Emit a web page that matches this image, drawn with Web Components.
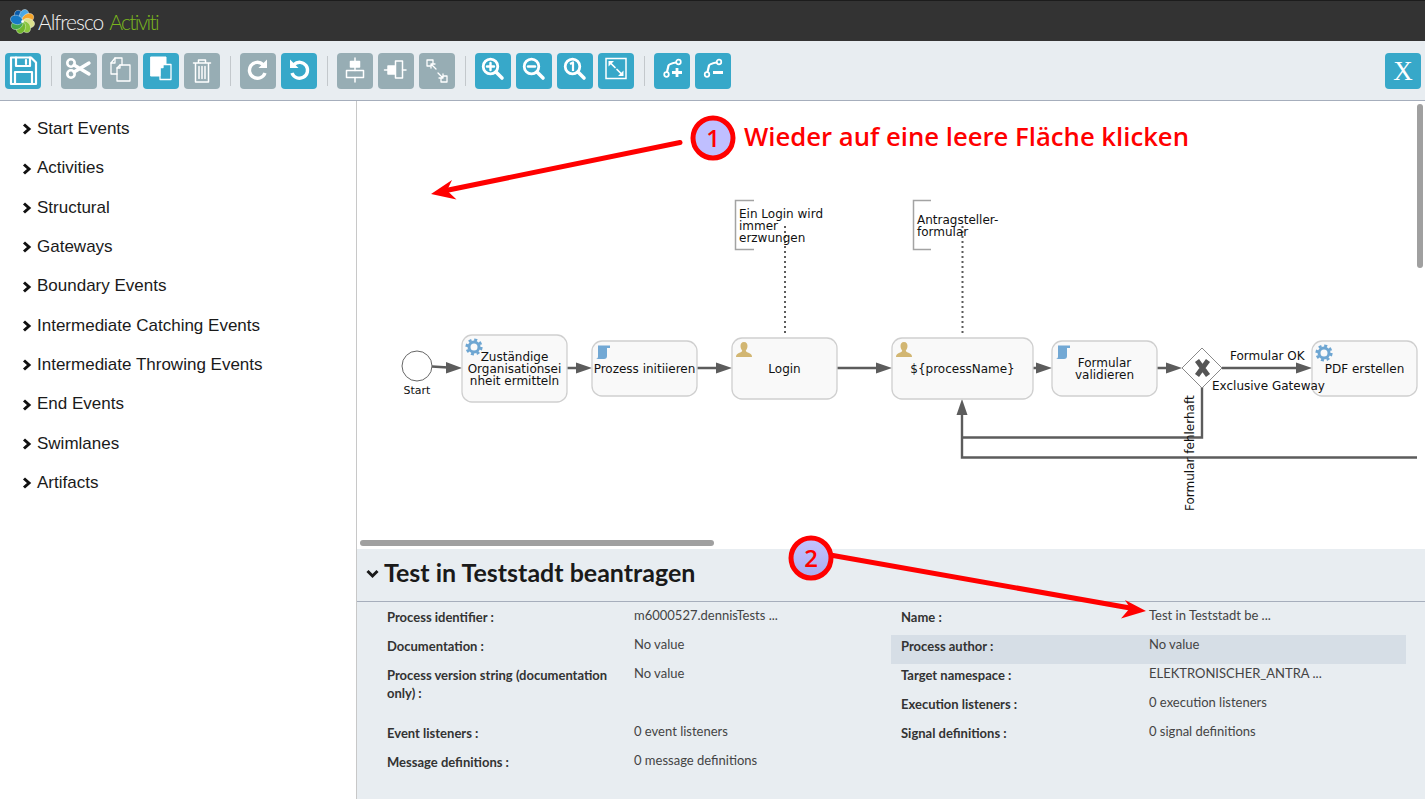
<!DOCTYPE html>
<html lang="de">
<head>
<meta charset="utf-8">
<title>Alfresco Activiti</title>
<style>
  html, body { margin: 0; height: 100%; }
  body { width: 1425px; height: 799px; overflow: hidden; display: flex; flex-direction: column; position: relative; background: #fff; font-family: "Liberation Sans", Arial, sans-serif; }
  svg.ico { width: 36px; height: 36px; display: block; fill: none; stroke: #fff; stroke-width: 1.6; stroke-linecap: round; stroke-linejoin: round; }
</style>
</head>
<body>

<app-header></app-header>

<app-toolbar>
  <!-- save -->
  <tool-button><svg class="ico" viewBox="0 0 36 36"><path d="M6 4.500H26L31 9.500V31H6Z" stroke-width="2.200"/><path d="M11 4.500V13H25V4.500M21 7V11M10 31V19H27V31" stroke-width="2.200"/></svg></tool-button>
  <tool-separator></tool-separator>
  <!-- cut -->
  <tool-button off><svg class="ico" viewBox="0 0 36 36"><circle cx="10" cy="10" r="3.700" stroke-width="2.600"/><circle cx="10" cy="21" r="3.700" stroke-width="2.600"/><path d="M13 12L28 21M13 19L28 10" stroke-width="3.400"/></svg></tool-button>
  <!-- copy -->
  <tool-button off><svg class="ico" viewBox="0 0 36 36"><path d="M15 21H9V10L13 5H20V12" stroke-width="1.300"/><path d="M13 5V10H9" stroke-width="1.300"/><path d="M15 15L18 12H28V28H15Z" stroke-width="1.300"/><path d="M18 12V15H15" stroke-width="1.300"/></svg></tool-button>
  <!-- paste -->
  <tool-button><svg class="ico" viewBox="0 0 36 36"><path d="M8 4H23V11H20L17 14V23H8Z" fill="#fff" stroke-width="1"/><path d="M20 11.500H28V26.500H17V14.500Z" stroke-width="1.300"/><path d="M20 11.500V14.500H17" fill="#fff" stroke-width="1.300"/></svg></tool-button>
  <!-- delete -->
  <tool-button off><svg class="ico" viewBox="0 0 36 36"><path d="M9.500 10H26.500M14.500 10V7H21.500V10M11.500 10V29H24.500V10M15 13.500V25.500M18 13.500V25.500M21 13.500V25.500" stroke-width="1.500"/></svg></tool-button>
  <tool-separator></tool-separator>
  <!-- redo -->
  <tool-button off><svg class="ico" viewBox="0 0 36 36"><path d="M23 11.500A8 8 0 1 0 25 20" stroke-width="3.400" stroke-linecap="butt"/><path d="M27 6.500V15H18.500Z" fill="#fff" stroke="none"/></svg></tool-button>
  <!-- undo -->
  <tool-button><svg class="ico" viewBox="0 0 36 36"><path d="M13 11.500A8 8 0 1 1 11 20" stroke-width="3.400" stroke-linecap="butt"/><path d="M9 6.500V15H17.500Z" fill="#fff" stroke="none"/></svg></tool-button>
  <tool-separator></tool-separator>
  <!-- align -->
  <tool-button off><svg class="ico" viewBox="0 0 36 36"><path d="M13.500 14V8.500H22.500V14Z" fill="#fff" stroke-width="1.500"/><path d="M18 5V8.500M18 14V17.500M18 24.500V29" stroke-width="1.500"/><rect x="9.500" y="17.500" width="17" height="7" stroke-width="1.500"/></svg></tool-button>
  <tool-button off><svg class="ico" viewBox="0 0 36 36"><path d="M10 13H17V21H10Z" fill="#fff" stroke-width="1.500"/><path d="M6.500 17H10M24.500 17H28" stroke-width="1.500"/><rect x="17.500" y="8" width="7" height="17" stroke-width="1.500"/></svg></tool-button>
  <tool-button off><svg class="ico" viewBox="0 0 36 36"><path d="M14 10.500V7H8V13H11.500M22 25.500V29H28V23H24.500" stroke-width="1.300"/><path d="M12 11L17 16M12 11H16M12 11V15M24 25L19 20M24 25H20M24 25V21" stroke-width="1.300"/></svg></tool-button>
  <tool-separator></tool-separator>
  <!-- zoom in, out, actual size -->
  <tool-button><svg class="ico" viewBox="0 0 36 36"><circle cx="15.500" cy="13.500" r="7.300" stroke-width="2.800"/><path d="M21 19L27 25" stroke-width="3.600"/><path d="M12 13.500H19M15.500 10V17" stroke-width="2.400"/></svg></tool-button>
  <tool-button><svg class="ico" viewBox="0 0 36 36"><circle cx="15.500" cy="13.500" r="7.300" stroke-width="2.800"/><path d="M21 19L27 25" stroke-width="3.600"/><path d="M12 13.500H19" stroke-width="2.400"/></svg></tool-button>
  <tool-button><svg class="ico" viewBox="0 0 36 36"><circle cx="15.500" cy="13.500" r="7.300" stroke-width="2.800"/><path d="M21 19L27 25" stroke-width="3.600"/><path d="M13 11L16 9.500V18" stroke-width="2.200" stroke-linecap="butt"/></svg></tool-button>
  <!-- fit -->
  <tool-button><svg class="ico" viewBox="0 0 36 36"><rect x="8" y="5.500" width="20" height="20" stroke-width="1.500" stroke-linejoin="miter"/><path d="M13 10.500L17 14.500M19 16.500L23 20.500" stroke-width="1.700"/><path d="M10.500 8H16L10.500 13.500ZM25.500 23H20L25.500 17.500Z" fill="#fff" stroke="none"/></svg></tool-button>
  <tool-separator></tool-separator>
  <!-- add / remove bendpoint -->
  <tool-button><svg class="ico" viewBox="0 0 36 36"><circle cx="12.500" cy="21.500" r="2.300" stroke-width="1.700"/><circle cx="24.500" cy="9" r="2.300" stroke-width="1.700"/><path d="M13 19L14.500 12.500Q15 10.800 22 9.500" stroke-width="2.200"/><path d="M18 19.500H28M23 15V24" stroke-width="2.800" stroke-linecap="butt"/></svg></tool-button>
  <tool-button><svg class="ico" viewBox="0 0 36 36"><circle cx="12" cy="21.500" r="2.300" stroke-width="1.700"/><circle cx="24" cy="9" r="2.300" stroke-width="1.700"/><path d="M12.500 19L14 12.500Q14.500 10.800 21.500 9.500" stroke-width="2.200"/><path d="M18 19.500H28" stroke-width="2.800" stroke-linecap="butt"/></svg></tool-button>
  <tool-button slot="end"><span style="font:27px/36px 'Liberation Serif',serif;color:#fff;display:block;text-align:center;width:36px;height:36px">X</span></tool-button>
</app-toolbar>

<editor-main>
  <stencil-list slot="side">
    <stencil-item>Start Events</stencil-item>
    <stencil-item>Activities</stencil-item>
    <stencil-item>Structural</stencil-item>
    <stencil-item>Gateways</stencil-item>
    <stencil-item>Boundary Events</stencil-item>
    <stencil-item>Intermediate Catching Events</stencil-item>
    <stencil-item>Intermediate Throwing Events</stencil-item>
    <stencil-item>End Events</stencil-item>
    <stencil-item>Swimlanes</stencil-item>
    <stencil-item>Artifacts</stencil-item>
  </stencil-list>
  <diagram-canvas></diagram-canvas>
  <process-panel heading="Test in Teststadt beantragen">
    <div slot="left" style="--label-width: 247px">
      <prop-row><span slot="label">Process identifier :</span>m6000527.dennisTests ...</prop-row>
      <prop-row><span slot="label">Documentation :</span>No value</prop-row>
      <prop-row tall><span slot="label">Process version string (documentation only) :</span>No value</prop-row>
      <prop-row><span slot="label">Event listeners :</span>0 event listeners</prop-row>
      <prop-row><span slot="label">Message definitions :</span>0 message definitions</prop-row>
    </div>
    <div slot="right" style="--label-width: 248px">
      <prop-row><span slot="label">Name :</span>Test in Teststadt be ...</prop-row>
      <prop-row hover><span slot="label">Process author :</span>No value</prop-row>
      <prop-row><span slot="label">Target namespace :</span>ELEKTRONISCHER_ANTRA ...</prop-row>
      <prop-row><span slot="label">Execution listeners :</span>0 execution listeners</prop-row>
      <prop-row><span slot="label">Signal definitions :</span>0 signal definitions</prop-row>
    </div>
  </process-panel>
</editor-main>

<callout-layer></callout-layer>

<script>
// dark bar on top with the logo
class AppHeader extends HTMLElement {
  constructor() {
    super();
    this.attachShadow({ mode: 'open' });
  }
  connectedCallback() {
    // petals of the logo, one per colour, turned round the centre
    const colours = ['#0a5cab', '#4aa8e4', '#f5a52a', '#dbe28e', '#8cc63f', '#72b82e', '#45a84a', '#1679c5'];
    const petals = colours.map((c, i) =>
      `<ellipse cx="12.500" cy="6.300" rx="4.600" ry="6.200" fill="${c}" stroke="#fff" stroke-width=".35" transform="rotate(${i * 45 - 30} 12.500 12.500)"/>`).join('');
    this.shadowRoot.innerHTML = `
      <style>
        :host { display: flex; align-items: center; box-sizing: border-box; height: 41px; background: #333; border-top: 1px solid #1c1c1c; padding-left: 10px; flex: none; }
        svg { width: 25px; height: 25px; display: block; }
        .name { font: 300 21px/1 "Lato", "Liberation Sans", sans-serif; margin-left: 3px; letter-spacing: -1.050px; color: #f2f2f2; }
        .app { color: #7ab51d; margin-left: 6px; letter-spacing: -1.700px; }
      </style>
      <svg viewBox="0 0 25 25">${petals}<circle cx="12.500" cy="12.500" r="1.300" fill="#fff"/></svg>
      <span class="name">Alfresco</span><span class="name app">Activiti</span>
    `;
  }
}
customElements.define('app-header', AppHeader);

// row of tool buttons, anything with slot="end" goes to the right side
class AppToolbar extends HTMLElement {
  constructor() {
    super();
    this.attachShadow({ mode: 'open' });
  }
  connectedCallback() {
    this.shadowRoot.innerHTML = `
      <style>
        :host { display: flex; box-sizing: border-box; height: 60px; flex: none; align-items: flex-start; padding: 12px 4px 0 5px; background: #e8edf1; border-bottom: 1px solid #a6aebc; }
        .left { display: flex; gap: 5px; flex: 1; }
      </style>
      <div class="left"><slot></slot></div>
      <slot name="end"></slot>
    `;
  }
}
customElements.define('app-toolbar', AppToolbar);

class ToolButton extends HTMLElement {
  constructor() {
    super();
    this.attachShadow({ mode: 'open' });
  }
  connectedCallback() {
    this.shadowRoot.innerHTML = `
      <style>
        :host { display: block; width: 36px; height: 36px; border-radius: 4px; background: #37a8c9; overflow: hidden; }
        :host([off]) { background: #97adb4; }
      </style>
      <slot></slot>
    `;
  }
}
customElements.define('tool-button', ToolButton);

class ToolSeparator extends HTMLElement {
  constructor() {
    super();
    this.attachShadow({ mode: 'open' });
  }
  connectedCallback() {
    this.shadowRoot.innerHTML = `
      <style>
        :host { display: block; width: 1px; height: 30px; margin: 3px 4px 0 5px; background: #c3c8cc; }
      </style>
    `;
  }
}
customElements.define('tool-separator', ToolSeparator);

// main area: stencil on the left, canvas and properties on the right
class EditorMain extends HTMLElement {
  constructor() {
    super();
    this.attachShadow({ mode: 'open' });
  }
  connectedCallback() {
    this.shadowRoot.innerHTML = `
      <style>
        :host { display: grid; grid-template-columns: 357px 1fr; flex: 1; min-height: 0; }
        .side { border-right: 1px solid #c8c8c8; }
        .work { display: flex; flex-direction: column; min-width: 0; }
      </style>
      <div class="side"><slot name="side"></slot></div>
      <div class="work"><slot></slot></div>
    `;
  }
}
customElements.define('editor-main', EditorMain);

class StencilList extends HTMLElement {
  constructor() {
    super();
    this.attachShadow({ mode: 'open' });
  }
  connectedCallback() {
    this.shadowRoot.innerHTML = `
      <style>
        :host { display: block; padding-top: 8.300px; }
      </style>
      <slot></slot>
    `;
  }
}
customElements.define('stencil-list', StencilList);

class StencilItem extends HTMLElement {
  constructor() {
    super();
    this.attachShadow({ mode: 'open' });
  }
  connectedCallback() {
    this.shadowRoot.innerHTML = `
      <style>
        :host { display: flex; align-items: center; height: 39.330px; padding-left: 22px; font: 17px "Liberation Sans", Arial, sans-serif; color: #1a1a1a; }
        svg { width: 10px; height: 12px; margin-right: 5px; flex: none; margin-top: 1px; }
      </style>
      <svg viewBox="0 0 10 12"><path d="M2 1.500L7 6L2 10.500" fill="none" stroke="#111" stroke-width="3"/></svg>
      <slot></slot>
    `;
  }
}
customElements.define('stencil-item', StencilItem);

// the process diagram, a free canvas: the viewBox uses page coordinates
class DiagramCanvas extends HTMLElement {
  constructor() {
    super();
    this.attachShadow({ mode: 'open' });
  }
  task(x, y, w, h, icon, lines, firstY) {
    const labels = lines.map((t, i) => `<text x="${x + w / 2}" y="${firstY + i * 12}" text-anchor="middle">${t}</text>`).join('');
    const mark = icon ? `<use href="#${icon}" x="${x + 3}" y="${y + 3}"/>` : '';
    return `<rect x="${x}" y="${y}" width="${w}" height="${h}" rx="10" fill="#f9f9f9" stroke="#cfcfcf" stroke-width="1.300"/>${mark}${labels}`;
  }
  connectedCallback() {
    this.shadowRoot.innerHTML = `
      <style>
        :host { display: block; height: 448px; flex: none; overflow: hidden; background: #fff; }
        svg { display: block; width: 1068px; height: 448px; }
        text { font: 12px "DejaVu Sans", Verdana, sans-serif; fill: #111; }
        .flow { fill: none; stroke: #5c5c5c; stroke-width: 2.400; }
        .head { fill: #5c5c5c; }
        .dots { stroke: #5c5c5c; stroke-width: 2; stroke-dasharray: 2 3; fill: none; }
        .note { fill: none; stroke: #a3a3a3; stroke-width: 1.500; }
      </style>
      <svg viewBox="357 101 1068 448">
        <defs>
          <symbol id="gear" width="18" height="18" viewBox="0 0 18 18">
            <circle cx="9" cy="9" r="5" fill="none" stroke="#6ea6d2" stroke-width="3"/>
            <circle cx="9" cy="9" r="7.300" fill="none" stroke="#6ea6d2" stroke-width="2.600" stroke-dasharray="3 2.730"/>
          </symbol>
          <symbol id="scroll" width="16" height="16" viewBox="0 0 16 16">
            <path d="M3 1.500H15V4H12V12C12 14 11 15 9 15H1C3 14.500 3 13 3 12Z" fill="#72a8d4"/>
          </symbol>
          <symbol id="user" width="18" height="18" viewBox="0 0 18 18">
            <path d="M9 1C11.500 1 12.500 3 12.500 5C12.500 7 11.500 8.500 10.800 9.500C10.800 11 13 11.500 15 12.500C16.500 13.200 17 14.500 17 16H1C1 14.500 1.500 13.200 3 12.500C5 11.500 7.200 11 7.200 9.500C6.500 8.500 5.500 7 5.500 5C5.500 3 6.500 1 9 1Z" fill="#d2b672"/>
          </symbol>
        </defs>

        <!-- annotations and their links -->
        <path class="note" d="M754 200.500H735.500V249.500H754"/>
        <path class="note" d="M931 200.500H913.500V249.500H931"/>
        <path class="dots" d="M785 226V334"/>
        <path class="dots" d="M962.500 226V334"/>
        <text x="739" y="218">Ein Login wird</text>
        <text x="739" y="230">immer</text>
        <text x="739" y="242">erzwungen</text>
        <text x="917" y="224">Antragsteller-</text>
        <text x="917" y="236">formular</text>

        <!-- sequence flows -->
        <path class="flow" d="M432 366.500L448 367.500M567 368H576M697 368H716M837 368H876M1033 368H1036M1157 368H1166M1222 368H1296"/>
        <path class="flow" d="M1202 387V437.500H962M1417 457.500H962V414"/>
        <path class="head" d="M462 368L446 362V373.500Z M592 368L576 362.500V373.500Z M732 368L716 362.500V373.500Z M892 368L876 362.500V373.500Z M1052 368L1036 362.500V373.500Z M1182 368L1166 362.500V373.500Z M1312 368L1296 362.500V373.500Z M962 399L956.500 415H967.500Z"/>

        <!-- nodes -->
        <circle cx="417" cy="366" r="15" fill="#fff" stroke="#666" stroke-width="1"/>
        <text x="417" y="394" text-anchor="middle" style="font-size:11px">Start</text>
        ${this.task(462, 335, 105, 67, 'gear', ['Zuständige', 'Organisationsei', 'nheit ermitteln'], 361)}
        ${this.task(592, 341, 105, 55, 'scroll', ['Prozess initiieren'], 373)}
        ${this.task(732, 338, 105, 61, 'user', ['Login'], 373)}
        ${this.task(892, 338, 141, 61, 'user', ['\${processName}'], 373)}
        ${this.task(1052, 341, 105, 55, 'scroll', ['Formular', 'validieren'], 367)}
        ${this.task(1312, 341, 105, 55, 'gear', ['PDF erstellen'], 373)}

        <path d="M1202 348L1222 368L1202 388L1182 368Z" fill="#fff" stroke="#8a8a8a" stroke-width="1"/>
        <path d="M1197 360.500L1208 375.500M1208 360.500L1197 375.500" stroke="#555" stroke-width="5" fill="none"/>

        <text x="1230" y="360">Formular OK</text>
        <text x="1212" y="390">Exclusive Gateway</text>
        <text transform="translate(1194 511) rotate(-90)">Formular fehlerhaft</text>

        <!-- scrollbars -->
        <rect x="1417" y="104" width="6" height="164" rx="3" fill="#a0a0a0"/>
        <rect x="360" y="540" width="354" height="6" rx="3" fill="#a0a0a0"/>
      </svg>
    `;
  }
}
customElements.define('diagram-canvas', DiagramCanvas);

// properties of the selected element, two columns under a title
class ProcessPanel extends HTMLElement {
  constructor() {
    super();
    this.attachShadow({ mode: 'open' });
  }
  connectedCallback() {
    const heading = this.getAttribute('heading');
    this.shadowRoot.innerHTML = `
      <style>
        :host { display: block; flex: 1; background: #e8edf1; font-family: "Lato", "Liberation Sans", sans-serif; color: #333; }
        .title { display: flex; align-items: center; gap: 5px; height: 53px; box-sizing: border-box; padding: 0 0 7px 9px; border-bottom: 1px solid #a6aebc; font-size: 25px; font-weight: 700; color: #1a1a1a; }
        .title svg { width: 13px; height: 10px; flex: none; margin-top: 5px; }
        .cols { display: grid; grid-template-columns: 514px 515px; padding: 4px 0 0 20px; }
      </style>
      <div class="title">
        <svg viewBox="0 0 13 10"><path d="M1.500 2L6.500 7L11.500 2" fill="none" stroke="#1a1a1a" stroke-width="3"/></svg>
        <span>${heading}</span>
      </div>
      <div class="cols">
        <div><slot name="left"></slot></div>
        <div><slot name="right"></slot></div>
      </div>
    `;
  }
}
customElements.define('process-panel', ProcessPanel);

class PropRow extends HTMLElement {
  constructor() {
    super();
    this.attachShadow({ mode: 'open' });
  }
  connectedCallback() {
    this.shadowRoot.innerHTML = `
      <style>
        :host { display: grid; grid-template-columns: var(--label-width) 1fr; box-sizing: border-box; height: 29px; padding: 0 10px; font-size: 13px; line-height: 18px; }
        :host([tall]) { height: 58px; }
        :host([hover]) { background: #d6dee6; }
        .label { font-weight: 700; color: #333; padding: 2px 20px 0 0; }
        .value { color: #444; padding-top: 0; }
      </style>
      <div class="label"><slot name="label"></slot></div>
      <div class="value"><slot></slot></div>
    `;
  }
}
customElements.define('prop-row', PropRow);

// red notes drawn over the whole screenshot
class CalloutLayer extends HTMLElement {
  constructor() {
    super();
    this.attachShadow({ mode: 'open' });
  }
  connectedCallback() {
    this.shadowRoot.innerHTML = `
      <style>
        :host { position: absolute; inset: 0; pointer-events: none; }
        svg { display: block; width: 1425px; height: 799px; }
        text { font-family: "Open Sans", "Noto Sans", sans-serif; font-weight: 600; fill: #f00; }
        .line { stroke: #f00; stroke-width: 5; stroke-linecap: round; fill: none; }
      </style>
      <svg viewBox="0 0 1425 799">
        <defs>
          <linearGradient id="badge" x1="0" y1="0" x2="0" y2="1">
            <stop offset="0" stop-color="#c4c4ff"/><stop offset="1" stop-color="#aaaaee"/>
          </linearGradient>
        </defs>
        <path class="line" d="M680 142.500L446 190.500"/>
        <path d="M431 194L452 180L447 190.500L456.500 199.500Z" fill="#f00"/>
        <circle cx="713" cy="138" r="20" fill="#bfbfff" stroke="#f00" stroke-width="5"/>
        <text x="713" y="147" text-anchor="middle" font-size="24">1</text>
        <text x="744" y="146" font-size="25.700">Wieder auf eine leere Fläche klicken</text>

        <path class="line" d="M833 555.500L1130 608"/>
        <path d="M1146 611L1125 600L1130 608L1121 618.500Z" fill="#f00"/>
        <circle cx="811" cy="558" r="20" fill="url(#badge)" stroke="#f00" stroke-width="5"/>
        <text x="811" y="567" text-anchor="middle" font-size="24">2</text>
      </svg>
    `;
  }
}
customElements.define('callout-layer', CalloutLayer);
</script>
</body>
</html>
